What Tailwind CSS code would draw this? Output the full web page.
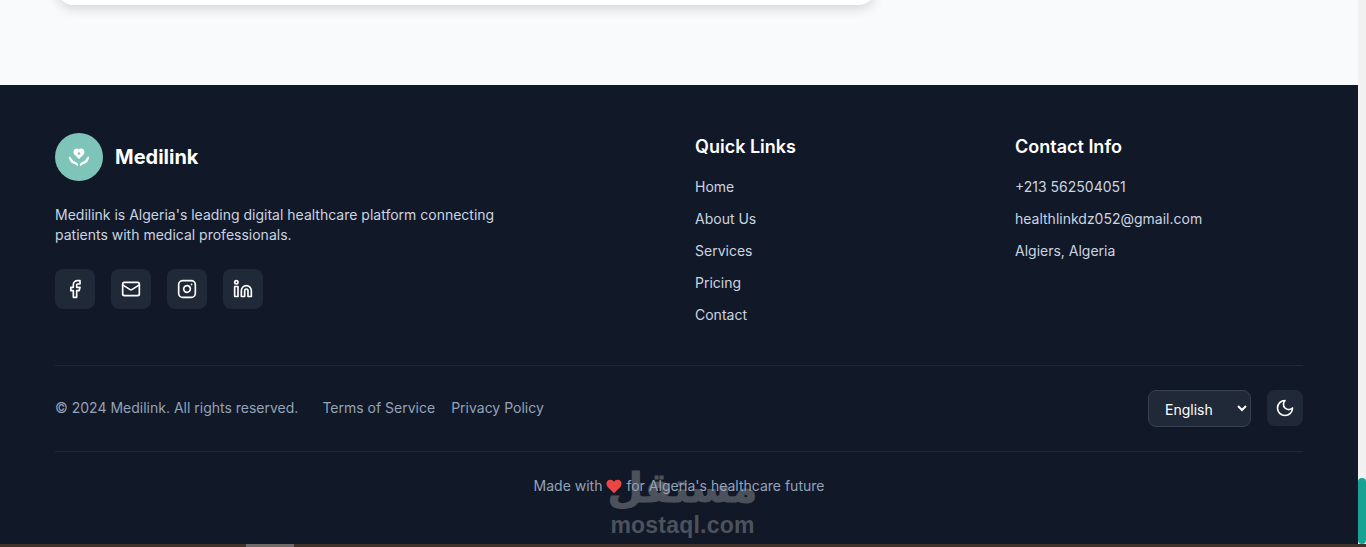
<!DOCTYPE html>
<html>
<head>
    <title>Medilink</title>
    <meta name="viewport" content="width=device-width, initial-scale=1.0">
    <script src="https://cdn.jsdelivr.net/npm/@tailwindcss/browser@4"></script>
</head>
<body class="h-[547px] overflow-hidden bg-[#f9fafb] font-['Inter',sans-serif]">
    <div class="flex h-[544px]">
        <div class="flex-1 min-w-0 flex flex-col">
            <!-- end of page content -->
            <section class="h-[85px] shrink-0 overflow-hidden px-[57px]">
                <div class="h-[45px] -mt-[40px] w-[818px] bg-white rounded-2xl shadow-[0_4px_12px_rgba(0,0,0,0.14)]"></div>
            </section>

            <footer class="relative flex-1 bg-[#111827] px-[55px] pt-12">
                <div class="grid grid-cols-4 gap-8 h-[232px]">
                    <div class="col-span-2">
                        <div class="flex items-center gap-3">
                            <div class="w-12 h-12 rounded-full bg-[#7fc4b8] flex items-center justify-center">
                                <svg class="w-6 h-6" viewBox="0 0 24 24" fill="none">
                                    <path fill="#fff" fill-rule="evenodd" d="M12 14 7.500 9.600C5.500 7.400 6.800 3.500 9.800 3.500c.9 0 1.700.4 2.200 1.100.5-.7 1.300-1.100 2.200-1.100 3 0 4.300 3.900 2.300 6.100L12 14ZM12 7.200a1.300 1.300 0 1 0 0 2.600 1.300 1.300 0 0 0 0-2.600Z"/>
                                    <path fill="#fff" d="M1.800 11.500c1.200.3 2.200 1.200 3 2.400l1.600 2c1.800.8 3.500 1.700 4.600 3v2.300c-1.200-1-3-1.800-5-2.600C3.500 17.300 2 14.800 1.800 11.500ZM22.200 11.500c-1.200.3-2.200 1.200-3 2.400l-1.600 2c-1.800.8-3.500 1.700-4.600 3v2.300c1.200-1 3-1.800 5-2.600 2.500-1.300 4-3.800 4.200-7.100Z"/>
                                </svg>
                            </div>
                            <span class="text-xl font-bold text-white">Medilink</span>
                        </div>
                        <p class="mt-6 max-w-md text-sm leading-5 text-[#cbd5e1]">Medilink is Algeria's leading digital healthcare platform connecting patients with medical professionals.</p>
                        <div class="mt-6 flex gap-4">
                            <a class="w-10 h-10 rounded-lg bg-[#1f2937] flex items-center justify-center text-white">
                                <svg class="w-5 h-5" viewBox="0 0 24 24" fill="none" stroke="currentColor" stroke-width="2" stroke-linecap="round" stroke-linejoin="round"><path d="M18 2h-3a5 5 0 0 0-5 5v3H7v4h3v8h4v-8h3l1-4h-4V7a1 1 0 0 1 1-1h3z"/></svg>
                            </a>
                            <a class="w-10 h-10 rounded-lg bg-[#1f2937] flex items-center justify-center text-white">
                                <svg class="w-5 h-5" viewBox="0 0 24 24" fill="none" stroke="currentColor" stroke-width="2" stroke-linecap="round" stroke-linejoin="round"><rect width="20" height="16" x="2" y="4" rx="2"/><path d="m22 7-8.970 5.700a1.940 1.940 0 0 1-2.060 0L2 7"/></svg>
                            </a>
                            <a class="w-10 h-10 rounded-lg bg-[#1f2937] flex items-center justify-center text-white">
                                <svg class="w-5 h-5" viewBox="0 0 24 24" fill="none" stroke="currentColor" stroke-width="2" stroke-linecap="round" stroke-linejoin="round"><rect width="20" height="20" x="2" y="2" rx="5" ry="5"/><path d="M16 11.370A4 4 0 1 1 12.630 8 4 4 0 0 1 16 11.370z"/><line x1="17.500" x2="17.510" y1="6.500" y2="6.500"/></svg>
                            </a>
                            <a class="w-10 h-10 rounded-lg bg-[#1f2937] flex items-center justify-center text-white">
                                <svg class="w-5 h-5" viewBox="0 0 24 24" fill="none" stroke="currentColor" stroke-width="2" stroke-linecap="round" stroke-linejoin="round"><path d="M16 8a6 6 0 0 1 6 6v7h-4v-7a2 2 0 0 0-2-2 2 2 0 0 0-2 2v7h-4v-7a6 6 0 0 1 6-6z"/><rect width="4" height="12" x="2" y="9"/><circle cx="4" cy="4" r="2"/></svg>
                            </a>
                        </div>
                    </div>

                    <div>
                        <h3 class="text-lg font-semibold leading-7 text-white">Quick Links</h3>
                        <ul class="mt-4 space-y-3 text-sm leading-5 text-[#cbd5e1]">
                            <li>Home</li>
                            <li>About Us</li>
                            <li>Services</li>
                            <li>Pricing</li>
                            <li>Contact</li>
                        </ul>
                    </div>

                    <div>
                        <h3 class="text-lg font-semibold leading-7 text-white">Contact Info</h3>
                        <ul class="mt-4 space-y-3 text-sm leading-5 text-[#cbd5e1]">
                            <li>+213 562504051</li>
                            <li>healthlinkdz052@gmail.com</li>
                            <li>Algiers, Algeria</li>
                        </ul>
                    </div>
                </div>

                <div class="h-[87px] pb-px border-y border-[#1f2937] flex items-center justify-between">
                    <div class="flex items-center text-sm text-[#94a3b8]">
                        <span>© 2024 Medilink. All rights reserved.</span>
                        <a class="ml-6">Terms of Service</a>
                        <a class="ml-4">Privacy Policy</a>
                    </div>
                    <div class="flex items-center gap-4">
                        <select class="w-[103px] h-[37px] pl-3 pt-[2px] rounded-lg bg-[#1f2937] border border-[#374151] text-sm text-white">
                            <option>English</option>
                        </select>
                        <button class="w-9 h-9 rounded-lg bg-[#1f2937] flex items-center justify-center text-white">
                            <svg class="w-5 h-5" viewBox="0 0 24 24" fill="none" stroke="currentColor" stroke-width="2" stroke-linecap="round" stroke-linejoin="round"><path d="M12 3a6 6 0 0 0 9 9 9 9 0 1 1-9-9Z"/></svg>
                        </button>
                    </div>
                </div>

                <p class="relative z-10 mt-6 flex items-center justify-center gap-1 text-sm leading-5 text-[#94a3b8]">
                    Made with
                    <svg class="w-4 h-4" viewBox="0 0 16 16" fill="#ef4444"><path d="M8 15.200 1.500 8.700C-.6 6.400.5 1.800 4.300 1.800c1.600 0 2.900.8 3.700 2 .8-1.200 2.100-2 3.700-2 3.800 0 4.900 4.600 2.800 6.900L8 15.200Z"/></svg>
                    for Algeria's healthcare future
                </p>

                <!-- site watermark -->
                <div class="absolute left-[611px] top-[378px] w-[143px] flex flex-col items-center text-[#4c525c] pointer-events-none">
                    <span class="font-['DejaVu_Sans',sans-serif] font-bold text-[41px] leading-[50px] [-webkit-text-stroke:1px_#4c525c]">مستقل</span>
                    <span class="font-['Liberation_Sans',sans-serif] font-bold text-[23px] leading-[24px] tracking-[0.2px]">mostaql.com</span>
                </div>
            </footer>
        </div>

        <!-- scrollbar -->
        <div class="w-2 shrink-0 bg-[#f1f1f1] flex flex-col justify-end">
            <div class="h-[66px] rounded-full bg-[#16a394]"></div>
        </div>
    </div>

    <!-- window edge -->
    <div class="h-[3px] bg-[#3f3229] pl-[246px]">
        <div class="h-[3px] w-[48px] bg-[#6f6a68]"></div>
    </div>
</body>
</html>
